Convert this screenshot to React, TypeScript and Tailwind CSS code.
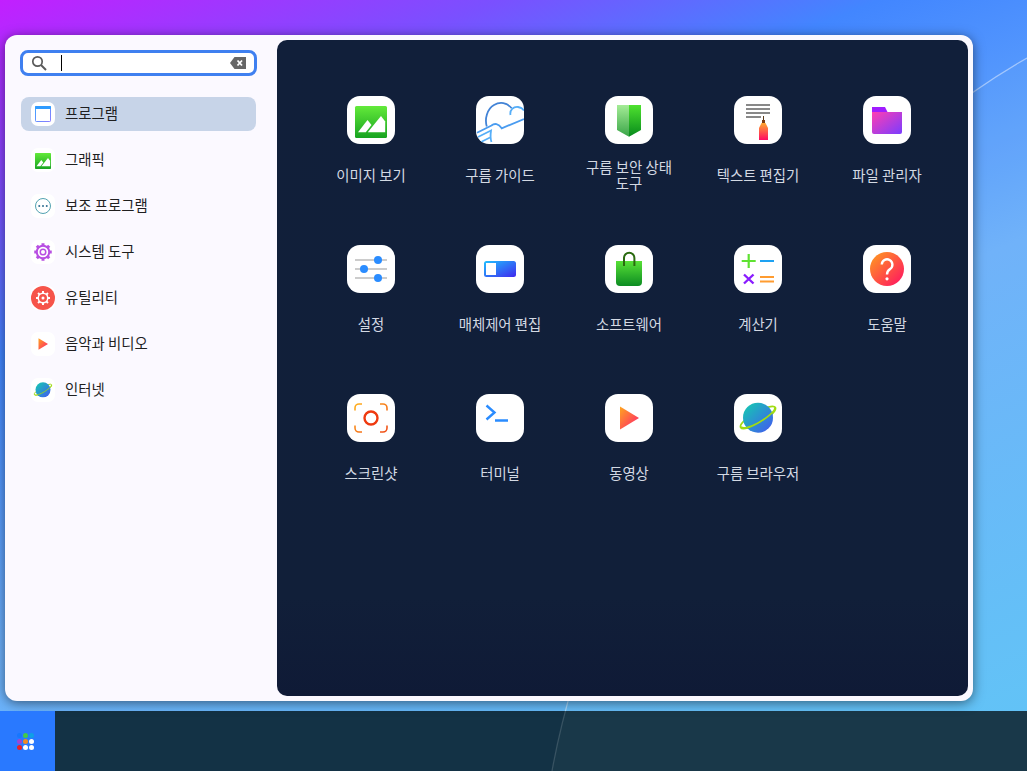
import type { ReactNode } from "react";

const Grad = ({ id, from, to, vertical }: { id: string; from: string; to: string; vertical?: boolean }) => (
  <linearGradient id={id} x1="0" y1="0" x2={vertical ? "0" : "1"} y2="1">
    <stop offset="0" stopColor={from} />
    <stop offset="1" stopColor={to} />
  </linearGradient>
);

const Svg = ({ children }: { children: ReactNode }) => (
  <svg viewBox="0 0 48 48" className="block w-full h-full" fill="none">
    {children}
  </svg>
);

const ImageGlyph = () => (
  <Svg>
    <defs>
      <Grad id="g-img" from="#63ea3a" to="#17a320" vertical />
    </defs>
    <rect x="8" y="10" width="32" height="32" rx="1.5" fill="url(#g-img)" />
    <path d="M11 36.3 20.5 24 24.5 29 18.8 36.3Z" fill="#fff" />
    <path d="M20.8 36.3 34 20 38.2 25.5V36.3Z" fill="#fff" />
  </Svg>
);

const GuideGlyph = () => (
  <Svg>
    <g fill="none" strokeWidth="1.8">
      <path d="M10.8 30.5C8.5 23 11 13 18 9 24 5.5 31 6.5 35.7 12.3" stroke="#4283d6" />
      <path d="M34.5 19C33.5 14 37.5 10.5 42 11 45 11.5 47 13 48 14.5" stroke="#55aef8" />
      <path d="M1 36.7 15.5 29.5C18.5 27 22.5 27.5 25.7 32.3L48 23" stroke="#4a9cf0" />
      <path d="M2 41 15 34.5C14.5 38 14 42 15.5 46" stroke="#55aef8" />
      <path d="M5 46 14 41.5" stroke="#55aef8" />
    </g>
  </Svg>
);

const ShieldGlyph = () => (
  <Svg>
    <defs>
      <Grad id="g-sh1" from="#a4ec96" to="#3aa548" vertical />
      <Grad id="g-sh2" from="#4fe22f" to="#078a1c" vertical />
    </defs>
    <path d="M12 9H24V40.7L12 34Z" fill="url(#g-sh1)" />
    <path d="M24 9H36V34L24 40.7Z" fill="url(#g-sh2)" />
  </Svg>
);

const TextGlyph = () => (
  <Svg>
    <defs>
      <Grad id="g-pen" from="#ffa82e" to="#ff0a62" vertical />
    </defs>
    <path d="M12 9H36M12 13H36M12 17H36M12 21H27" stroke="#888" strokeWidth="2" />
    <path d="M29.5 20V24" stroke="#5a3a1a" />
    <rect x="28" y="24" width="3" height="3" fill="#7a3b10" />
    <path d="M27.5 27H31.5L34 32V44H25V32Z" fill="url(#g-pen)" />
  </Svg>
);

const FolderGlyph = () => (
  <Svg>
    <defs>
      <Grad id="g-fold" from="#ff3fb2" to="#7a3cff" />
    </defs>
    <path d="M9 11H22L24.5 16H9Z" fill="#a01cff" />
    <path d="M9 16H39V36a2 2 0 0 1-2 2H11a2 2 0 0 1-2-2Z" fill="url(#g-fold)" />
  </Svg>
);

const SettingsGlyph = () => (
  <Svg>
    <path d="M8 15H40M8 24H40M8 33H40" stroke="#bcbcbc" strokeWidth="1.6" />
    <circle cx="31" cy="15" r="4" fill="#2a8cff" />
    <circle cx="17" cy="24" r="4" fill="#2a8cff" />
    <circle cx="31" cy="33" r="4" fill="#2a8cff" />
  </Svg>
);

const MediaGlyph = () => (
  <Svg>
    <defs>
      <Grad id="g-med" from="#1fc0ff" to="#4028ee" />
    </defs>
    <rect x="8" y="16" width="32" height="16" rx="2.5" fill="url(#g-med)" />
    <rect x="10" y="18" width="10" height="12" fill="#fff" />
  </Svg>
);

const BagGlyph = () => (
  <Svg>
    <defs>
      <Grad id="g-bag" from="#58e036" to="#0c8c22" vertical />
    </defs>
    <path d="M11 16H37V37a4 4 0 0 1-4 4H15a4 4 0 0 1-4-4Z" fill="url(#g-bag)" />
    <path d="M19 21V13a5.2 5.2 0 0 1 10.4 0V21" stroke="#2b6a10" strokeWidth="2" />
  </Svg>
);

const CalcGlyph = () => (
  <Svg>
    <path d="M7.7 16H21.7M14.7 9V23" stroke="#5fe232" strokeWidth="2.2" />
    <path d="M26 16H40" stroke="#1ea2f2" strokeWidth="2.2" />
    <path d="M10 29.5 19.5 38.5M19.5 29.5 10 38.5" stroke="#8a1cff" strokeWidth="2.4" />
    <path d="M26 32H40M26 36.5H40" stroke="#ff9c30" strokeWidth="2" />
  </Svg>
);

const HelpGlyph = () => (
  <Svg>
    <defs>
      <Grad id="g-help" from="#ff9f1e" to="#ff0e64" />
    </defs>
    <circle cx="24" cy="24" r="17" fill="url(#g-help)" />
    <path d="M18.8 19.5a5.3 5.3 0 1 1 8.3 4.5C25 25.4 24 26.6 24 29.5" stroke="#fff" strokeWidth="2.4" />
    <circle cx="24" cy="33.8" r="1.6" fill="#fff" />
  </Svg>
);

const ShotGlyph = () => (
  <Svg>
    <defs>
      <Grad id="g-shot" from="#ffb01e" to="#ef4d17" />
    </defs>
    <path
      d="M8 16.5V14a4 4 0 0 1 4-4H15M33 10H36a4 4 0 0 1 4 4V16.5M40 31.5V34a4 4 0 0 1-4 4H33M15 38H12a4 4 0 0 1-4-4V31.5"
      stroke="url(#g-shot)"
      strokeWidth="1.6"
    />
    <circle cx="24" cy="24" r="6.5" stroke="#ef3a10" strokeWidth="2.4" />
  </Svg>
);

const TerminalGlyph = () => (
  <Svg>
    <path d="M10.5 11.5 18.5 18.5 10.5 25.5" stroke="#2a8cff" strokeWidth="2.4" />
    <path d="M19 26.5H32" stroke="#2a8cff" strokeWidth="2.4" />
  </Svg>
);

const PlayGlyph = () => (
  <Svg>
    <defs>
      <Grad id="g-play" from="#ffa61e" to="#ff1c70" />
    </defs>
    <path d="M15 12.5 34 24 15 35.5Z" fill="url(#g-play)" />
  </Svg>
);

const PlanetGlyph = () => (
  <Svg>
    <defs>
      <Grad id="g-planet" from="#12cfae" to="#4456f2" />
    </defs>
    <ellipse cx="24" cy="23.5" rx="20" ry="5.5" transform="rotate(-30 24 23.5)" stroke="#a0dc12" strokeWidth="1.7" />
    <circle cx="24" cy="23.7" r="15" fill="url(#g-planet)" />
    <path d="M40.5 13.6C42.5 16 33 24 24 29 15 34 8.5 35 7 32.8" stroke="#a0dc12" strokeWidth="1.7" />
  </Svg>
);

const WindowGlyph = () => (
  <Svg>
    <defs>
      <Grad id="g-win" from="#3da4ff" to="#8a7cff" />
    </defs>
    <rect x="9" y="9" width="30" height="30" rx="1.5" stroke="url(#g-win)" strokeWidth="2" fill="#fff" />
    <rect x="8" y="8" width="32" height="6" rx="1.5" fill="#2f9bff" />
  </Svg>
);

const MoreGlyph = () => (
  <Svg>
    <circle cx="24" cy="24" r="15" stroke="#3f97a8" strokeWidth="1.8" />
    <circle cx="16.5" cy="24" r="2" fill="#2f6f90" />
    <circle cx="24" cy="24" r="2" fill="#2f6f90" />
    <circle cx="31.5" cy="24" r="2" fill="#2f6f90" />
  </Svg>
);

const gearTeeth = [0, 45, 90, 135, 180, 225, 270, 315];

const GearGlyph = () => (
  <Svg>
    <circle cx="24" cy="24" r="12.5" stroke="#b84fe2" strokeWidth="4" />
    <circle cx="24" cy="24" r="5.5" stroke="#b84fe2" strokeWidth="3" />
    {gearTeeth.map((a) => (
      <rect key={a} x="21" y="6.5" width="6" height="6" fill="#b84fe2" transform={`rotate(${a} 24 24)`} />
    ))}
  </Svg>
);

const UtilGlyph = () => (
  <Svg>
    <circle cx="24" cy="24" r="24" fill="#f6544a" />
    <circle cx="24" cy="24" r="9.5" stroke="#fff" strokeWidth="3" />
    <circle cx="24" cy="24" r="3" fill="#fff" />
    {gearTeeth.map((a) => (
      <rect key={a} x="22" y="10" width="4" height="4.5" fill="#fff" transform={`rotate(${a} 24 24)`} />
    ))}
  </Svg>
);

const categories = [
  { name: "프로그램", icon: <WindowGlyph />, active: true },
  { name: "그래픽", icon: <ImageGlyph /> },
  { name: "보조 프로그램", icon: <MoreGlyph /> },
  { name: "시스템 도구", icon: <GearGlyph /> },
  { name: "유틸리티", icon: <UtilGlyph /> },
  { name: "음악과 비디오", icon: <PlayGlyph /> },
  { name: "인터넷", icon: <PlanetGlyph /> },
];

const apps = [
  { name: "이미지 보기", icon: <ImageGlyph /> },
  { name: "구름 가이드", icon: <GuideGlyph /> },
  { name: "구름 보안 상태 도구", icon: <ShieldGlyph /> },
  { name: "텍스트 편집기", icon: <TextGlyph /> },
  { name: "파일 관리자", icon: <FolderGlyph /> },
  { name: "설정", icon: <SettingsGlyph /> },
  { name: "매체제어 편집", icon: <MediaGlyph /> },
  { name: "소프트웨어", icon: <BagGlyph /> },
  { name: "계산기", icon: <CalcGlyph /> },
  { name: "도움말", icon: <HelpGlyph /> },
  { name: "스크린샷", icon: <ShotGlyph /> },
  { name: "터미널", icon: <TerminalGlyph /> },
  { name: "동영상", icon: <PlayGlyph /> },
  { name: "구름 브라우저", icon: <PlanetGlyph /> },
];

const launcherDots = ["#1677ff", "#42c94a", "#0f9fe6", "#9a46d8", "#f08a24", "#ffffff", "#e8202a", "#ffffff", "#ffffff"];

export default function App() {
  return (
    <div className="relative w-[1027px] h-[771px] overflow-hidden flex flex-col bg-[linear-gradient(158deg,#c21fff_0%,#7a50ff_17%,#4286ff_30%,#6db0fa_55%,#5cc3f7_100%)] font-['Noto_Sans_CJK_KR','Noto_Sans',sans-serif]">
      {/* 메뉴 창 */}
      <div className="relative z-10 ml-[5px] mt-[35px] w-[968px] h-[666px] shrink-0 flex rounded-xl bg-[#fbf9ff] shadow-[0_2px_12px_rgba(0,0,0,0.5)]">
        <div className="w-[272px] shrink-0 pl-[15px] pr-[20px] pt-[15px]">
          <div className="h-[26px] flex items-center rounded-lg border-[3px] border-[#3f80f0] bg-white pl-[8px] pr-[8px]">
            <svg viewBox="0 0 16 16" className="w-[16px] h-[16px] shrink-0" fill="none">
              <circle cx="6.5" cy="6.5" r="4.7" stroke="#5a5a5a" strokeWidth="1.7" />
              <path d="M10 10 15 15" stroke="#5a5a5a" strokeWidth="2" />
            </svg>
            <div className="ml-[14px] w-px h-[16px] bg-black" />
            <svg viewBox="0 0 16 12" className="ml-auto w-[16px] h-[12px] shrink-0">
              <path d="M4.5 0H16V12H4.5L0 6Z" fill="#666" />
              <path d="M7.5 3.5 12 8.5M12 3.5 7.5 8.5" stroke="#fff" strokeWidth="1.8" />
            </svg>
          </div>

          <div className="mt-[21px] flex flex-col gap-[12px] px-px">
            {categories.map((c) => (
              <div
                key={c.name}
                className={`h-[34px] flex items-center rounded-lg pl-[10px] ${c.active ? "bg-[#c7d4e8]" : ""}`}
              >
                <div className="w-[24px] h-[24px] rounded-[7px] bg-white overflow-hidden shrink-0">{c.icon}</div>
                <span className="ml-[10px] -mt-[2px] text-[14.4px] leading-[20px] text-[#1f1f1f] whitespace-nowrap">{c.name}</span>
              </div>
            ))}
          </div>
        </div>

        <div className="my-[5px] mr-[5px] w-[691px] min-w-0 rounded-[10px] bg-[linear-gradient(180deg,#111f3a_0%,#111f39_85%,#0f1a36_100%)] pl-[29.5px] pt-[56px]">
          <div className="grid grid-cols-[repeat(5,129px)] gap-y-[54px]">
            {apps.map((a) => (
              <div key={a.name} className="flex flex-col items-center">
                <div className="w-[48px] h-[48px] rounded-[13px] bg-white overflow-hidden">{a.icon}</div>
                <div className="mt-[15px] h-[32px] w-[100px] flex items-center justify-center text-center break-keep text-[14.4px] leading-[16px] text-[#d3d9e3]">
                  {a.name}
                </div>
              </div>
            ))}
          </div>
        </div>
      </div>

      {/* 작업 표시줄 */}
      <div className="relative mt-[10px] h-[60px] shrink-0 flex bg-[#133245]">
        <div className="relative z-10 w-[55px] h-full bg-[#2979ff] flex items-center justify-center pr-[5px]">
          <div className="grid grid-cols-3 gap-[1px] w-[17px]">
            {launcherDots.map((color, i) => (
              <span key={i} className="w-[5px] h-[5px] rounded-full" style={{ backgroundColor: color }} />
            ))}
          </div>
        </div>
      </div>

      {/* 배경 곡선 */}
      <svg className="absolute inset-0 z-[1] w-[1027px] h-[771px]" viewBox="0 0 1027 771" fill="none">
        <defs>
          <linearGradient id="arc-line" gradientUnits="userSpaceOnUse" x1="0" y1="0" x2="0" y2="771">
            <stop offset="0.922" stopColor="#ffffff" stopOpacity="0.45" />
            <stop offset="0.922" stopColor="#ffffff" stopOpacity="0.15" />
          </linearGradient>
        </defs>
        <path d="M552 771C590 560 760 210 1027 58V771Z" fill="#e4ffe0" fillOpacity="0.03" />
        <path d="M552 771C590 560 760 210 1027 58" stroke="url(#arc-line)" strokeWidth="1.2" />
      </svg>
    </div>
  );
}
